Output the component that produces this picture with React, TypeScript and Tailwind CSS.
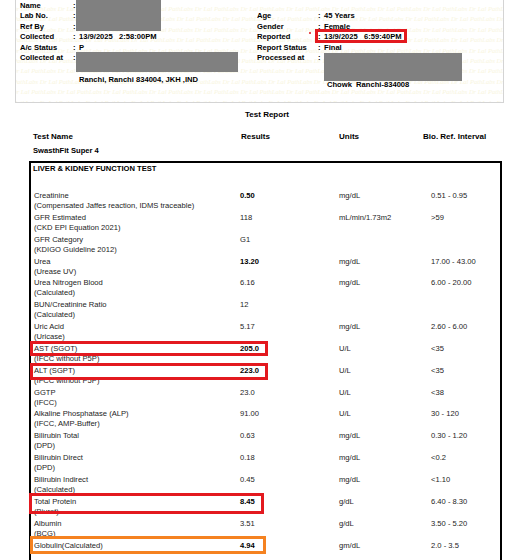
import React from "react";

type Row = {
	name: string;
	method: string;
	result: string;
	bold?: boolean;
	unit: string;
	ref: string;
};

const rows: Row[] = [
	{ name: "Creatinine", method: "(Compensated Jaffes reaction, IDMS traceable)", result: "0.50", bold: true, unit: "mg/dL", ref: "0.51 - 0.95" },
	{ name: "GFR Estimated", method: "(CKD EPI Equation 2021)", result: "118", unit: "mL/min/1.73m2", ref: ">59" },
	{ name: "GFR Category", method: "(KDIGO Guideline 2012)", result: "G1", unit: "", ref: "" },
	{ name: "Urea", method: "(Urease UV)", result: "13.20", bold: true, unit: "mg/dL", ref: "17.00 - 43.00" },
	{ name: "Urea Nitrogen Blood", method: "(Calculated)", result: "6.16", unit: "mg/dL", ref: "6.00 - 20.00" },
	{ name: "BUN/Creatinine Ratio", method: "(Calculated)", result: "12", unit: "", ref: "" },
	{ name: "Uric Acid", method: "(Uricase)", result: "5.17", unit: "mg/dL", ref: "2.60 - 6.00" },
	{ name: "AST (SGOT)", method: "(IFCC without P5P)", result: "205.0", bold: true, unit: "U/L", ref: "<35" },
	{ name: "ALT (SGPT)", method: "(IFCC without P5P)", result: "223.0", bold: true, unit: "U/L", ref: "<35" },
	{ name: "GGTP", method: "(IFCC)", result: "23.0", unit: "U/L", ref: "<38" },
	{ name: "Alkaline Phosphatase (ALP)", method: "(IFCC, AMP-Buffer)", result: "91.00", unit: "U/L", ref: "30 - 120" },
	{ name: "Bilirubin Total", method: "(DPD)", result: "0.63", unit: "mg/dL", ref: "0.30 - 1.20" },
	{ name: "Bilirubin Direct", method: "(DPD)", result: "0.18", unit: "mg/dL", ref: "<0.2" },
	{ name: "Bilirubin Indirect", method: "(Calculated)", result: "0.45", unit: "mg/dL", ref: "<1.10" },
	{ name: "Total Protein", method: "(Biuret)", result: "8.45", bold: true, unit: "g/dL", ref: "6.40 - 8.30" },
	{ name: "Albumin", method: "(BCG)", result: "3.51", unit: "g/dL", ref: "3.50 - 5.20" },
	{ name: "Globulin(Calculated)", method: "", result: "4.94", bold: true, unit: "gm/dL", ref: "2.0 - 3.5" },
];

const leftInfo = [
	["Name", ""],
	["Lab No.", ""],
	["Ref By", ""],
	["Collected", "13/9/2025\u00a0\u00a0\u00a02:58:00PM"],
	["A/c Status", "P"],
	["Collected at", ""],
];

const rightInfo = [
	["Age", "45 Years"],
	["Gender", "Female"],
	["Reported", "13/9/2025\u00a0\u00a0\u00a06:59:40PM"],
	["Report Status", "Final"],
	["Processed at", ""],
];

// faint background print of the lab name
function Watermark() {
	const line = "Dr Lal PathLabs ".repeat(14);
	return (
		<div className="absolute inset-0 overflow-hidden font-['Liberation_Serif',serif] italic text-[6.5px] leading-[10.4px] text-[#f8f5de] whitespace-nowrap select-none">
			{Array.from({ length: 10 }).map((_, i) => (
				<div key={i} className={i % 2 ? "-ml-[22px] pt-[4px] -mb-[4px]" : "-ml-[4px] pt-[4px] -mb-[4px]"}>
					{line}
				</div>
			))}
		</div>
	);
}

export default function App() {
	return (
		<div className="relative w-[513px] h-[560px] overflow-hidden bg-white text-black font-['Liberation_Sans',Arial,sans-serif]">
			{/* patient header */}
			<div className="relative ml-[15px] w-[489px] h-[103px] border-x border-b border-[#d4d4d4] overflow-hidden">
				<Watermark />
				<div className="relative flex pt-[1px] text-[7.6px] font-bold leading-[10.4px]">
					<div className="w-[241px] pl-[4px]">
						{leftInfo.map(([label, value]) => (
							<div key={label} className="flex">
								<span className="w-[53px]">{label}</span>
								<span className="w-[6px]">:</span>
								<span>{value}</span>
							</div>
						))}
						<div className="mt-[11.6px] ml-[59px] whitespace-nowrap">
							Ranchi, Ranchi 834004, JKH ,IND
						</div>
					</div>
					<div className="flex-1">
						<div className="h-[10.4px]" />
						{rightInfo.map(([label, value]) => (
							<div key={label} className="flex">
								<span className="w-[61px]">{label}</span>
								<span className="w-[6px]">:</span>
								<span>{value}</span>
							</div>
						))}
						<div className="mt-[16.6px] ml-[70px] whitespace-nowrap">
							Chowk&nbsp;&nbsp;Ranchi-834008
						</div>
					</div>
				</div>
				{/* redactions */}
				<div className="absolute left-[60px] top-0 w-[85px] h-[31px] bg-[#808080]" />
				<div className="absolute left-[60px] top-[52px] w-[162px] h-[20px] bg-[#808080]" />
				<div className="absolute left-[308px] top-[53px] w-[138px] h-[28px] bg-[#808080]" />
			</div>

			{/* report */}
			<div className="ml-[29px] w-[473px]">
				<div className="mt-[7px] pl-[3px] text-center text-[8px] font-bold leading-[10px]">Test Report</div>
				<div className="mt-[12px] pl-[4px] grid grid-cols-[208px_98px_84px_1fr] text-[8px] font-bold leading-[10px]">
					<span>Test Name</span>
					<span>Results</span>
					<span>Units</span>
					<span className="whitespace-nowrap">Bio. Ref. Interval</span>
				</div>
				<div className="mt-[4px] pl-[4px] text-[7.6px] font-bold leading-[10px]">SwasthFit Super 4</div>

				<div className="mt-[5px] h-[420px] border-x-2 border-t-2 border-black pt-[1px]">
					<div className="pl-[2px] text-[7.6px] font-bold leading-[10px]">
						LIVER &amp; KIDNEY FUNCTION TEST
					</div>
					<div className="mt-[17px] pl-[3px] text-[7.6px] leading-[10px] text-[#1c1c1c]">
						{rows.map((r) => (
							<div key={r.name} className="h-[21.85px] grid grid-cols-[206px_99px_92px_1fr]">
								<div className="whitespace-nowrap">
									<div>{r.name}</div>
									<div>{r.method}</div>
								</div>
								<div className={r.bold ? "font-bold text-black" : ""}>{r.result}</div>
								<div>{r.unit}</div>
								<div className="whitespace-nowrap">{r.ref}</div>
							</div>
						))}
					</div>
				</div>
			</div>

			{/* highlight marks drawn over the report */}
			<div className="absolute left-[309px] top-[32px] w-[2px] h-[2px] rounded-full bg-[#e3191f]" />
			<div className="absolute left-[315px] top-[29px] w-[92px] h-[14px] border-[3px] border-[#e3191f]" />
			<div className="absolute left-[30px] top-[341px] w-[238px] h-[15px] border-[3px] border-[#e3191f]" />
			<div className="absolute left-[30px] top-[363px] w-[238px] h-[17px] border-[3px] border-[#e3191f]" />
			<div className="absolute left-[29px] top-[493px] w-[235px] h-[21px] border-[3px] border-[#e3191f]" />
			<div className="absolute left-[30px] top-[536px] w-[236px] h-[18px] border-[3px] border-[#f58220]" />
		</div>
	);
}
